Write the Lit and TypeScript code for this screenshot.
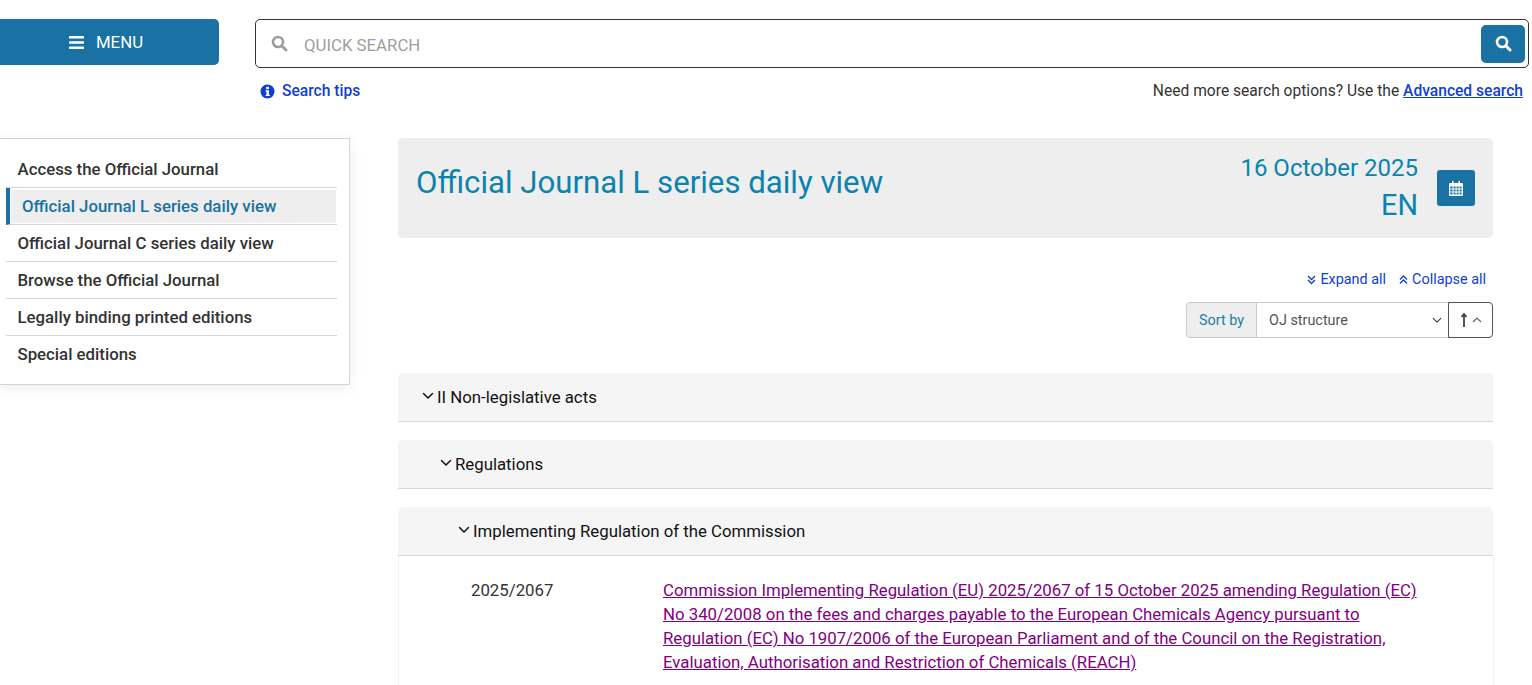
import { LitElement, html, css, svg } from "lit";
import { customElement } from "lit/decorators.js";

const chevron = svg`<path d="M1.5 1.5 6 6l4.5-4.5" fill="none" stroke="currentColor" stroke-width="1.5" stroke-linecap="round" stroke-linejoin="round"/>`;

const searchIcon = svg`<circle cx="7" cy="7" r="5" fill="none" stroke="currentColor" stroke-width="2.6"/><path d="m10.8 10.8 4.2 4.2" stroke="currentColor" stroke-width="3" stroke-linecap="round"/>`;

@customElement("app-root")
export class AppRoot extends LitElement {
  static styles = css`
    :host {
      display: block;
      height: 685px;
      overflow: hidden;
      background: #fff;
      font-family: Roboto, "Liberation Sans", sans-serif;
      font-size: 16.8px;
      color: #333;
    }
    a {
      color: #0f3fd1;
    }

    /* header */
    .header {
      display: flex;
      gap: 36px;
      padding: 19px 3px 0 0;
    }
    .menu-btn {
      flex: none;
      width: 227px;
      height: 46px;
      margin-left: -8px;
      border-radius: 5px;
      background: #1a71a3;
      color: #fff;
      display: flex;
      align-items: center;
      justify-content: center;
      gap: 12px;
      box-sizing: border-box;
    }
    .menu-btn svg {
      margin-left: 1px;
    }
    .search-col {
      flex: 1;
    }
    .search-box {
      height: 49px;
      box-sizing: border-box;
      border: 1px solid #333;
      border-radius: 5px;
      display: flex;
      align-items: center;
      padding: 0 3px 0 15px;
      color: #a19d9a;
    }
    .search-box .placeholder {
      margin-left: 16px;
      padding-top: 2px;
      flex: 1;
    }
    .search-btn {
      width: 44px;
      height: 38px;
      border-radius: 5px;
      background: #1a71a3;
      color: #fff;
      display: flex;
      align-items: center;
      justify-content: center;
    }
    .search-links {
      display: flex;
      justify-content: space-between;
      padding: 14px 6px 0 5px;
      line-height: 19px;
      font-size: 15.6px;
    }
    .tips {
      display: flex;
      align-items: center;
      gap: 7px;
      font-weight: 500;
      color: #0f3fd1;
    }
    .adv a {
      font-weight: 500;
    }

    /* page body */
    .body {
      display: flex;
      gap: 48px;
      margin-top: 37px;
    }
    .side {
      flex: none;
      width: 350px;
      height: 247px;
      box-sizing: border-box;
      border: 1px solid #c9d7de;
      border-left: none;
      box-shadow: 0 4px 14px rgba(0, 0, 0, 0.07);
      padding: 12px 12px 0 6px;
      font-weight: 500;
      color: #333;
    }
    .side-item {
      height: 37px;
      box-sizing: border-box;
      border-bottom: 1px solid #d5d5d5;
      padding-left: 11.5px;
      line-height: 37px;
    }
    .side-item:last-child {
      border-bottom: none;
    }
    .side-item.active {
      border-left: 4px solid #1a71a3;
      padding: 2px 1px 1px 1px;
      line-height: 33px;
      color: #1a71a3;
    }
    .active span {
      display: block;
      height: 33px;
      background: #eee;
      padding-left: 11px;
    }

    .main {
      flex: none;
      width: 1095px;
    }
    .title-bar {
      height: 100px;
      box-sizing: border-box;
      border-radius: 5px;
      background: #eee;
      color: #0a83ad;
      display: flex;
      align-items: center;
      padding: 0 18px;
    }
    h1 {
      flex: 1;
      margin: 0 0 10px;
      font-size: 31.2px;
      font-weight: 400;
      line-height: 38px;
    }
    .date {
      text-align: right;
      font-size: 24px;
      line-height: 29px;
      margin-right: 19px;
      padding-top: 2px;
    }
    .date .lang {
      font-size: 28.8px;
      line-height: 40px;
      margin-top: 2px;
    }
    .cal-btn {
      width: 38px;
      height: 36px;
      border-radius: 3px;
      background: #1a71a3;
      display: flex;
      align-items: center;
      justify-content: center;
    }

    .tools {
      display: flex;
      justify-content: flex-end;
      gap: 13px;
      margin-top: 33px;
      padding-right: 7px;
      font-size: 14.4px;
      line-height: 17px;
      color: #0f3fd1;
    }
    .tools span {
      display: flex;
      align-items: center;
      gap: 4px;
    }
    .sort {
      display: flex;
      justify-content: flex-end;
      margin-top: 14px;
      font-size: 14.4px;
      height: 36px;
    }
    .sort > div {
      box-sizing: border-box;
      display: flex;
      align-items: center;
      border: 1px solid #ccc;
    }
    .sort-label {
      width: 71px;
      justify-content: center;
      background: #eee;
      color: #1a7fa8;
      border-radius: 4px 0 0 4px;
    }
    .sort-select {
      width: 193px;
      padding: 0 6px 0 12px;
      margin-left: -1px;
      border-left: 1px solid #ccc;
      justify-content: space-between;
      color: #555;
    }
    .sort-select svg {
      color: #444;
    }
    .sort .sort-dir {
      width: 45px;
      margin-left: -1px;
      border-color: #555;
      border-radius: 0 4px 4px 0;
      justify-content: center;
      gap: 4px;
    }

    .section {
      height: 49px;
      box-sizing: border-box;
      background: #f5f5f5;
      border-bottom: 1px solid #d8d8d8;
      border-radius: 5px 5px 0 0;
      display: flex;
      align-items: center;
      gap: 3px;
      padding-left: 24px;
      color: #111;
    }
    .section svg {
      margin-top: -3px;
    }
    .section.l2 {
      padding-left: 42px;
    }
    .section.l3 {
      padding-left: 60px;
    }
    .first {
      margin-top: 35px;
    }
    .next {
      margin-top: 18px;
    }
    .row {
      display: grid;
      grid-template-columns: 192px 770px;
      padding: 22px 0 0 72px;
      line-height: 24px;
      border-left: 1px solid #f1f1f1;
      border-right: 1px solid #f1f1f1;
      margin-right: -1px;
      height: 140px;
      box-sizing: border-box;
    }
    .row a {
      color: #800080;
    }
  `;

  private sideItems = [
    "Access the Official Journal",
    "Official Journal L series daily view",
    "Official Journal C series daily view",
    "Browse the Official Journal",
    "Legally binding printed editions",
    "Special editions",
  ];

  private doubleChevron(up: boolean) {
    const d = up ? "M1 4.5 4.5 1 8 4.5M1 8.5 4.5 5 8 8.5" : "M1 1 4.5 4.5 8 1M1 5 4.5 8.5 8 5";
    return html`<svg width="9" height="10" viewBox="0 0 9 10"><path d=${d} fill="none" stroke="currentColor" stroke-width="1.4"/></svg>`;
  }

  private section(label: string, level = "") {
    return html`<div class="section ${level}">
      <svg width="12" height="8" viewBox="0 0 12 8">${chevron}</svg>${label}
    </div>`;
  }

  render() {
    return html`
      <div class="header">
        <div class="menu-btn">
          <svg width="15" height="13" viewBox="0 0 15 13" fill="#fff">
            <rect y="0" width="15" height="2.6" rx="0.6" />
            <rect y="5.2" width="15" height="2.6" rx="0.6" />
            <rect y="10.4" width="15" height="2.6" rx="0.6" />
          </svg>
          MENU
        </div>
        <div class="search-col">
          <div class="search-box">
            <svg width="17" height="17" viewBox="0 0 17 17">${searchIcon}</svg>
            <span class="placeholder">QUICK SEARCH</span>
            <div class="search-btn">
              <svg width="17" height="17" viewBox="0 0 17 17">${searchIcon}</svg>
            </div>
          </div>
          <div class="search-links">
            <span class="tips">
              <svg width="15" height="15" viewBox="0 0 15 15">
                <circle cx="7.5" cy="7.5" r="7" fill="#0f3fd1" />
                <rect x="6.2" y="2.8" width="2.7" height="2.4" fill="#fff" />
                <path d="M5.6 6.3h3.3v4.4h1v1.4H5.6v-1.4h.9V7.7h-.9z" fill="#fff" />
              </svg>
              Search tips
            </span>
            <span class="adv">Need more search options? Use the <a href="#">Advanced search</a></span>
          </div>
        </div>
      </div>

      <div class="body">
        <nav class="side">
          ${this.sideItems.map((item, i) =>
            i === 1
              ? html`<div class="side-item active"><span>${item}</span></div>`
              : html`<div class="side-item">${item}</div>`
          )}
        </nav>
        <div class="main">
          <div class="title-bar">
            <h1>Official Journal L series daily view</h1>
            <div class="date">
              <div>16 October 2025</div>
              <div class="lang">EN</div>
            </div>
            <div class="cal-btn">
              <svg width="14" height="15" viewBox="0 0 14 15" fill="#fff">
                <path d="M3 0h1.6v2H9.4V0H11v2h2a1 1 0 0 1 1 1v11a1 1 0 0 1-1 1H1a1 1 0 0 1-1-1V3a1 1 0 0 1 1-1h2zM1.2 5.5v2h2.4v-2zm3.4 0v2h2v-2zm3 0v2h2v-2zm3 0v2h2v-2zm-9.4 3v2h2.4v-2zm3.4 0v2h2v-2zm3 0v2h2v-2zm3 0v2h2v-2zm-9.4 3v2h2.4v-2zm3.4 0v2h2v-2zm3 0v2h2v-2zm3 0v2h2v-2z" fill-rule="evenodd"/>
              </svg>
            </div>
          </div>

          <div class="tools">
            <span>${this.doubleChevron(false)}Expand all</span>
            <span>${this.doubleChevron(true)}Collapse all</span>
          </div>

          <div class="sort">
            <div class="sort-label">Sort by</div>
            <div class="sort-select">
              OJ structure
              <svg width="10" height="7" viewBox="0 0 12 8">${chevron}</svg>
            </div>
            <div class="sort-dir">
              <svg width="8" height="14" viewBox="0 0 8 14">
                <path d="M4 1v13M1.5 4 4 1l2.5 3" fill="none" stroke="#444" stroke-width="1.8"/>
              </svg>
              <svg width="10" height="6" viewBox="0 0 10 6">
                <path d="M1 5 5 1l4 4" fill="none" stroke="#666" stroke-width="1.2"/>
              </svg>
            </div>
          </div>

          <div class="first">${this.section("II Non-legislative acts")}</div>
          <div class="next">${this.section("Regulations", "l2")}</div>
          <div class="next">${this.section("Implementing Regulation of the Commission", "l3")}</div>

          <div class="row">
            <div>2025/2067</div>
            <div>
              <a href="#">Commission Implementing Regulation (EU) 2025/2067 of 15 October 2025 amending Regulation (EC) No 340/2008 on the fees and charges payable to the European Chemicals Agency pursuant to Regulation (EC) No 1907/2006 of the European Parliament and of the Council on the Registration, Evaluation, Authorisation and Restriction of Chemicals (REACH)</a>
            </div>
          </div>
        </div>
      </div>
    `;
  }
}
